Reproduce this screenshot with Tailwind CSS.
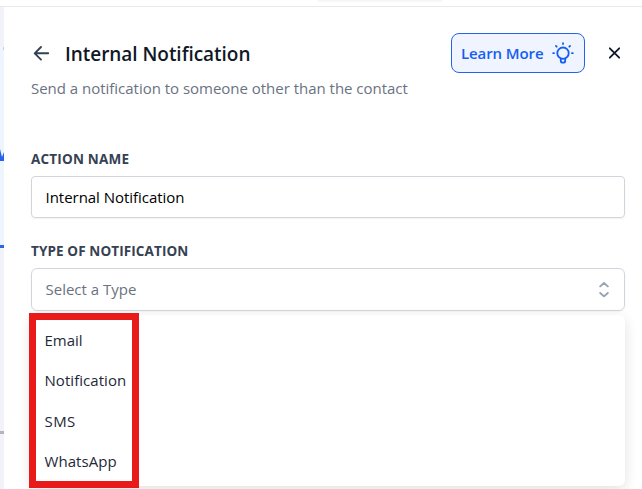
<!DOCTYPE html>
<html lang="en">
<head>
  <meta charset="UTF-8">
  <meta name="viewport" content="width=device-width, initial-scale=1.0">
  <title>Internal Notification</title>
  <script src="https://cdn.jsdelivr.net/npm/@tailwindcss/browser@4"></script>
</head>
<body class="h-[489px] overflow-hidden bg-white font-['Open_Sans','Noto_Sans',sans-serif] text-[15px]">
  <!-- Top bar -->
  <header class="flex h-[7px] justify-center border-b border-[#e8e9eb] pl-[118px]">
    <div class="h-px w-[124px] rounded-b bg-gray-100 shadow-xs"></div>
  </header>

  <div class="flex h-[482px]">
    <!-- Visible edge of the workflow canvas -->
    <aside class="flex w-1 shrink-0 flex-col overflow-hidden bg-[#f2f3f8]">
      <div class="mt-10 h-[201px] shrink-0 border-b-[3px] border-[#2f66e8] bg-[#eef5ff]">
        <div class="ml-[3px] h-[3px] w-px bg-[#c3cdf5]"></div>
        <svg class="mt-[98px]" width="4" height="13" viewBox="0 0 4 13">
          <path d="M0 1L2 9L4 4V13H0Z" fill="#2563eb"/>
        </svg>
      </div>
      <div class="mt-[183px] h-[3px] shrink-0 bg-[#b5b4bd]"></div>
    </aside>

    <main class="flex-1 pl-[27px] pr-[17px] pt-[26px]">
      <div class="flex h-10 items-center">
        <svg class="ml-0.5 shrink-0" width="18" height="18" viewBox="0 0 18 18" fill="none" stroke="#334155" stroke-width="1.9" stroke-linecap="round" stroke-linejoin="round">
          <path d="M15.2 9.3H2M8 3L1.7 9.3L8 15.6"/>
        </svg>
        <h1 class="ml-3.5 mt-0.5 whitespace-nowrap text-[19px] font-semibold tracking-[-0.04px] text-gray-900">Internal Notification</h1>
        <button class="ml-auto flex h-10 w-[134px] shrink-0 items-center justify-between rounded-lg border border-[#2563eb] bg-[#eff4ff] pl-[9px] pr-2.5 font-semibold text-[#155eef]">
          <span class="whitespace-nowrap tracking-[-0.1px]">Learn More</span>
          <svg width="22" height="22" viewBox="0 0 22 22" fill="none" stroke="currentColor" stroke-width="1.8" stroke-linecap="round" stroke-linejoin="round">
            <circle cx="11" cy="11.2" r="5.7"/>
            <path d="M8.8 17V19Q8.8 20.7 11 20.7T13.2 19V17M11 1.2V2M4 4L4.7 4.7M18 4L17.3 4.7M1.2 11.2H2M20 11.2H20.8"/>
          </svg>
        </button>
        <button class="ml-6 mr-[5px] shrink-0">
          <svg width="11" height="12" viewBox="0 0 11 12" fill="none" stroke="#101828" stroke-width="1.8" stroke-linecap="round">
            <path d="M.8 1.3L10.2 10.7M10.2 1.3L.8 10.7"/>
          </svg>
        </button>
      </div>
      <p class="mt-[5px] h-5 whitespace-nowrap leading-5 tracking-[-0.02px] text-gray-500">Send a notification to someone other than the contact</p>

      <label class="mt-[51px] block h-5 text-[13.5px] font-bold leading-5 tracking-[0.2px] text-gray-700">ACTION NAME</label>
      <div class="mt-[7px] flex h-[42px] items-center rounded border border-gray-300 px-[13.5px] tracking-[-0.03px] text-black shadow-xs">Internal Notification</div>

      <label class="mt-[23px] block h-5 text-[13.5px] font-bold leading-5 tracking-[0.11px] text-gray-700">TYPE OF NOTIFICATION</label>
      <div class="mt-[7px] flex h-[43px] items-center justify-between rounded-md border border-gray-300 pl-[13.5px] pr-[15px] text-gray-500 shadow-xs">
        <span>Select a Type</span>
        <svg width="10" height="16" viewBox="0 0 10 16" fill="none" stroke="#98a2b3" stroke-width="1.9" stroke-linecap="round" stroke-linejoin="round">
          <path d="M1.2 4.4L5 1L8.8 4.4M1.2 11L5 14.4L8.8 11"/>
        </svg>
      </div>

      <!-- Options menu, with the highlight frame over it -->
      <div class="relative mt-1 h-[171px] rounded-md bg-white pl-[13.5px] pt-[5px] text-gray-800 shadow-[0_4px_14px_rgb(0_0_0/0.12)]">
        <div class="flex h-[40.4px] items-center">Email</div>
        <div class="flex h-[40.4px] items-center tracking-[0.05px]">Notification</div>
        <div class="flex h-[40.4px] items-center tracking-[0.4px]">SMS</div>
        <div class="flex h-[40.4px] items-center tracking-[0.05px]">WhatsApp</div>
        <div class="absolute -left-0.5 -top-0.5 h-[175px] w-[110px] border-x-[7px] border-y-[7.5px] border-[#e81a1a]"></div>
      </div>
    </main>
  </div>
</body>
</html>
